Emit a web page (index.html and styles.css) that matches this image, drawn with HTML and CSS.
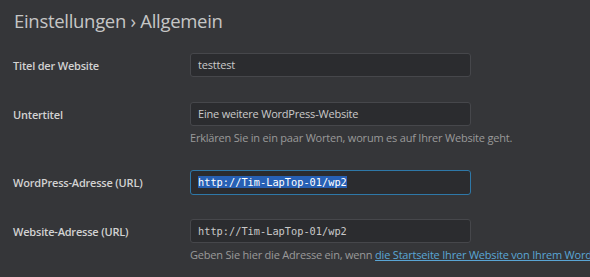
FILE: index.html
```html
<!DOCTYPE html>
<html lang="de">
<head>
    <meta charset="utf-8">
    <title>Einstellungen › Allgemein</title>
    <link rel="stylesheet" href="styles.css">
</head>
<body>

<h1 class="page-title">Einstellungen › Allgemein</h1>

<div class="form">
    <div class="row">
        <label class="label" for="blogname">Titel der Website</label>
        <div class="field">
            <div class="input" id="blogname">testtest</div>
        </div>
    </div>

    <div class="row">
        <label class="label" for="blogdescription">Untertitel</label>
        <div class="field">
            <div class="input" id="blogdescription">Eine weitere WordPress-Website</div>
            <p class="description">Erklären Sie in ein paar Worten, worum es auf Ihrer Website geht.</p>
        </div>
    </div>

    <div class="row">
        <label class="label" for="siteurl">WordPress-Adresse (URL)</label>
        <div class="field">
            <div class="input code focused" id="siteurl"><span class="selected">http://Tim-LapTop-01/wp2</span></div>
        </div>
    </div>

    <div class="row">
        <label class="label" for="home">Website-Adresse (URL)</label>
        <div class="field">
            <div class="input code" id="home">http://Tim-LapTop-01/wp2</div>
            <p class="description">Geben Sie hier die Adresse ein, wenn <a href="#">die Startseite Ihrer Website von Ihrem WordPress-Verzeichnis abweichen soll</a>.</p>
        </div>
    </div>
</div>

</body>
</html>
```

FILE: styles.css
```css
* {
    box-sizing: border-box;
}

html, body {
    margin: 0;
    background-color: #353639;
    overflow: hidden;
}

body {
    font-family: "Open Sans", "Noto Sans", sans-serif;
    color: #cfcfcf;
    padding: 0 0 0 13px;
    white-space: nowrap;
}

.page-title {
    font-size: 18.5px;
    font-weight: 400;
    color: #c6c6c6;
    margin: 0;
    padding: 8px 0 0 1px;
    height: 41px;
    letter-spacing: -0.3px;
}

.row {
    display: flex;
    padding: 12px 0;
}

.label {
    width: 177px;
    flex: none;
    font-size: 11px;
    font-weight: 600;
    letter-spacing: -0.2px;
    color: #d2d2d2;
    line-height: 25px;
}

.field {
    flex: none;
}

.input {
    width: 281px;
    height: 24px;
    background-color: #2b2c2f;
    border: 1px solid #46474b;
    border-radius: 3px;
    padding: 0 7px;
    font-size: 11px;
    letter-spacing: -0.2px;
    line-height: 22px;
    color: #cacaca;
}

.code {
    font-family: "DejaVu Sans Mono", monospace;
    font-size: 10.3px;
    letter-spacing: 0;
    color: #c8c8c8;
}

.focused {
    border: 1px solid #2e78a8;
    height: 25px;
}

.selected {
    background-color: #2760b4;
    color: #ffffff;
}

.description {
    margin: 4px 0 0;
    font-size: 11px;
    letter-spacing: -0.2px;
    line-height: 16px;
    color: #9a9a9a;
}

.description a {
    color: #5aa6d6;
}
```
